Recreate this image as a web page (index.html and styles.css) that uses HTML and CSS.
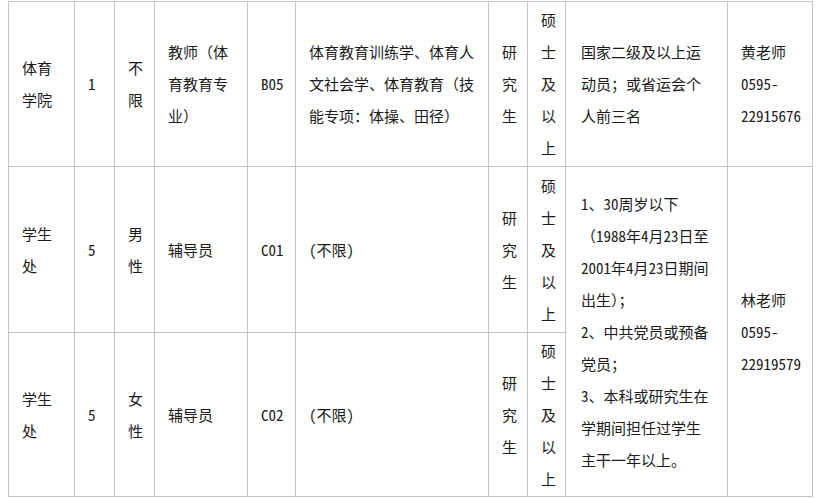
FILE: index.html
```html
<!DOCTYPE html>
<html lang="zh-CN">
<head>
<meta charset="utf-8">
<title>招聘岗位表</title>
<link rel="stylesheet" href="styles.css">
</head>
<body>
<table class="jobs">
  <colgroup>
    <col class="c1"><col class="c2"><col class="c3"><col class="c4"><col class="c5">
    <col class="c6"><col class="c7"><col class="c8"><col class="c9"><col class="c10">
  </colgroup>
  <tbody>
    <tr class="r1">
      <td>体育<br>学院</td>
      <td>1</td>
      <td>不<br>限</td>
      <td>教师（体<br>育教育专<br>业）</td>
      <td>B05</td>
      <td>体育教育训练学、体育人<br>文社会学、体育教育（技<br>能专项：体操、田径）</td>
      <td>研<br>究<br>生</td>
      <td>硕<br>士<br>及<br>以<br>上</td>
      <td class="req">国家二级及以上运<br>动员；或省运会个<br>人前三名</td>
      <td>黄老师<br>0595-<br>22915676</td>
    </tr>
    <tr class="r2">
      <td>学生<br>处</td>
      <td>5</td>
      <td>男<br>性</td>
      <td>辅导员</td>
      <td>C01</td>
      <td>(不限)</td>
      <td>研<br>究<br>生</td>
      <td>硕<br>士<br>及<br>以<br>上</td>
      <td class="req" rowspan="2">1、30周岁以下<br>（1988年4月23日至<br>2001年4月23日期间<br>出生）；<br>2、中共党员或预备<br>党员；<br>3、本科或研究生在<br>学期间担任过学生<br>主干一年以上。</td>
      <td rowspan="2">林老师<br>0595-<br>22919579</td>
    </tr>
    <tr class="r3">
      <td>学生<br>处</td>
      <td>5</td>
      <td>女<br>性</td>
      <td>辅导员</td>
      <td>C02</td>
      <td>(不限)</td>
      <td>研<br>究<br>生</td>
      <td>硕<br>士<br>及<br>以<br>上</td>
    </tr>
  </tbody>
</table>
</body>
</html>
```

FILE: styles.css
```css
html, body {
  margin: 0;
  padding: 0;
  background: #ffffff;
}

body {
  padding: 1px 0 0 8px;
  font-family: "Noto Sans Mono CJK SC", "Noto Sans CJK SC", "Liberation Sans", sans-serif;
  font-size: 15px;
  color: #1a1a1a;
}

.jobs {
  border-collapse: collapse;
  table-layout: fixed;
  width: 804px;
}

.jobs td {
  border: 1px solid #bcc5c8;
  padding: 0 8px 0 13px;
  line-height: 32px;
  vertical-align: middle;
  text-align: left;
  white-space: nowrap;
  overflow: hidden;
}

.jobs td.req {
  padding-left: 15px;
}

.c1 { width: 66px; }
.c2 { width: 40px; }
.c3 { width: 40px; }
.c4 { width: 93px; }
.c5 { width: 48px; }
.c6 { width: 193px; }
.c7 { width: 39px; }
.c8 { width: 38px; }
.c9 { width: 162px; }
.c10 { width: 85px; }

.r1 { height: 165px; }
.r2 { height: 166px; }
.r3 { height: 164px; }
```
